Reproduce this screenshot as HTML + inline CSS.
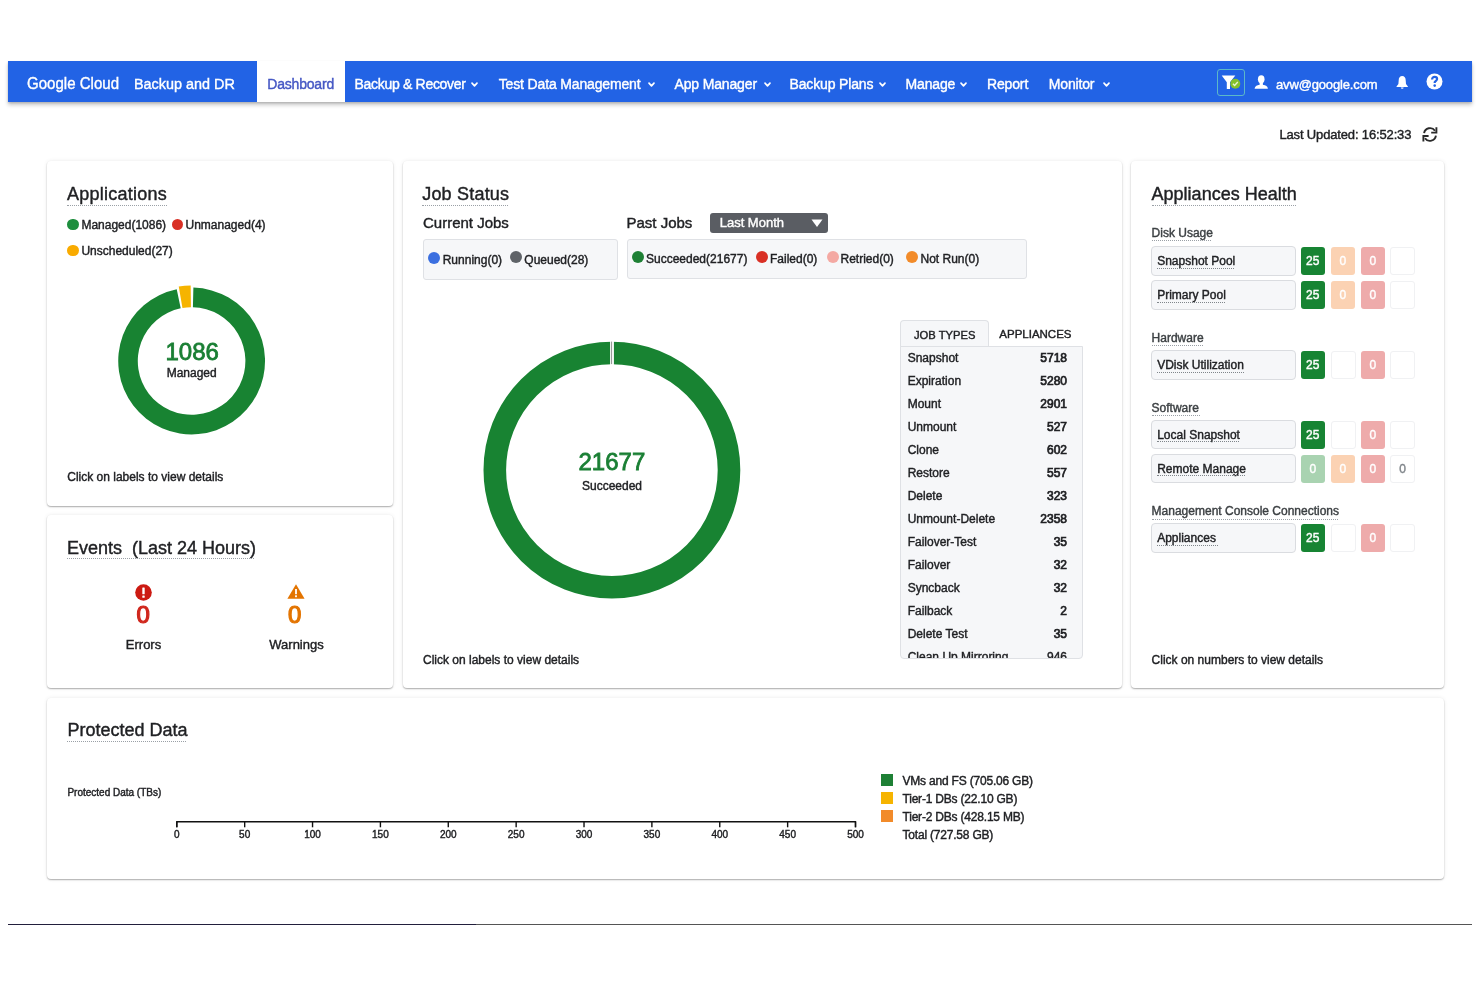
<!DOCTYPE html>
<html><head><meta charset="utf-8"><title>Dashboard</title>
<style>
html,body{margin:0;padding:0;background:#fff;width:1480px;height:987px;overflow:hidden;position:relative;}
body{font-family:"Liberation Sans",sans-serif;color:#202124;}
.t{position:absolute;line-height:1;white-space:nowrap;-webkit-text-stroke:0.4px currentColor;}
.r{position:absolute;box-sizing:border-box;}
svg{position:absolute;overflow:visible;}
.wrap{position:absolute;left:0;top:0;width:1480px;height:987px;filter:blur(0.55px);}
</style></head><body><div class="wrap">

<div class="r" style="left:8px;top:61px;width:1464px;height:41px;background:#2263e5;box-shadow:0 3px 4px rgba(0,0,0,0.22),0 1px 2px rgba(0,0,0,0.15);"></div>
<div class="r" style="left:257px;top:61px;width:88px;height:41px;background:#fff;"></div>
<div class="t" style="left:27.00px;top:74.61px;font-size:17px;color:#fff;transform:scaleX(0.885);transform-origin:0 0;">Google Cloud</div>
<div class="t" style="left:134.00px;top:75.76px;font-size:15.4px;color:#fff;transform:scaleX(0.936);transform-origin:0 0;">Backup and DR</div>
<div class="t" style="left:267.30px;top:76.55px;font-size:14px;color:#4557c4;letter-spacing:-0.2px;">Dashboard</div>
<div class="t" style="left:354.50px;top:76.75px;font-size:14px;color:#fff;letter-spacing:-0.3px;">Backup &amp; Recover</div>
<svg style="left:471.1px;top:82.2px" width="7" height="6" viewBox="0 0 7 6"><path d="M1 1.2 L3.5 3.8 L6 1.2" fill="none" stroke="#fff" stroke-width="1.7" stroke-linecap="round" stroke-linejoin="round"/></svg>
<div class="t" style="left:498.75px;top:76.75px;font-size:14px;color:#fff;letter-spacing:-0.15px;">Test Data Management</div>
<svg style="left:648.0px;top:82.2px" width="7" height="6" viewBox="0 0 7 6"><path d="M1 1.2 L3.5 3.8 L6 1.2" fill="none" stroke="#fff" stroke-width="1.7" stroke-linecap="round" stroke-linejoin="round"/></svg>
<div class="t" style="left:674.50px;top:76.75px;font-size:14px;color:#fff;letter-spacing:-0.15px;">App Manager</div>
<svg style="left:763.5px;top:82.2px" width="7" height="6" viewBox="0 0 7 6"><path d="M1 1.2 L3.5 3.8 L6 1.2" fill="none" stroke="#fff" stroke-width="1.7" stroke-linecap="round" stroke-linejoin="round"/></svg>
<div class="t" style="left:789.50px;top:76.75px;font-size:14px;color:#fff;letter-spacing:-0.15px;">Backup Plans</div>
<svg style="left:879.0px;top:82.2px" width="7" height="6" viewBox="0 0 7 6"><path d="M1 1.2 L3.5 3.8 L6 1.2" fill="none" stroke="#fff" stroke-width="1.7" stroke-linecap="round" stroke-linejoin="round"/></svg>
<div class="t" style="left:905.50px;top:76.75px;font-size:14px;color:#fff;letter-spacing:-0.15px;">Manage</div>
<svg style="left:960.0px;top:82.2px" width="7" height="6" viewBox="0 0 7 6"><path d="M1 1.2 L3.5 3.8 L6 1.2" fill="none" stroke="#fff" stroke-width="1.7" stroke-linecap="round" stroke-linejoin="round"/></svg>
<div class="t" style="left:987.00px;top:76.75px;font-size:14px;color:#fff;letter-spacing:-0.15px;">Report</div>
<div class="t" style="left:1048.75px;top:76.75px;font-size:14px;color:#fff;letter-spacing:-0.15px;">Monitor</div>
<svg style="left:1102.5px;top:82.2px" width="7" height="6" viewBox="0 0 7 6"><path d="M1 1.2 L3.5 3.8 L6 1.2" fill="none" stroke="#fff" stroke-width="1.7" stroke-linecap="round" stroke-linejoin="round"/></svg>
<div class="r" style="left:1217px;top:69px;width:28px;height:27px;border:1.5px solid #5cb8c8;border-radius:3px;"></div>
<svg style="left:1220px;top:74px" width="22" height="18" viewBox="0 0 22 18"><path d="M1.7 1.6 H15.3 L10 8.2 V14.9 H6.8 V8.2 Z" fill="#fff"/><circle cx="15.3" cy="9.7" r="5" fill="#84c12c"/><path d="M12.9 9.8 L14.6 11.4 L17.8 8.1" fill="none" stroke="#e8f5d0" stroke-width="1.4"/></svg>
<svg style="left:1254px;top:74px" width="15" height="16" viewBox="0 0 15 16"><ellipse cx="7.25" cy="5.2" rx="3.3" ry="4" fill="#fff"/><rect x="5.6" y="8" width="3.3" height="3.5" fill="#fff"/><path d="M0.6 14.8 C0.8 12.2 3 10.8 7.25 10.8 C11.5 10.8 13.7 12.2 13.9 14.8 Z" fill="#fff"/></svg>
<div class="t" style="left:1276.00px;top:77.50px;font-size:13px;color:#fff;letter-spacing:-0.15px;">avw@google.com</div>
<svg style="left:1395px;top:75px" width="14" height="15" viewBox="0 0 14 15"><path d="M7.2 0.9 C5 0.9 3.7 2.8 3.7 5.2 L3.4 9 L1.5 11.6 V12 H12.9 V11.6 L11 9 L10.7 5.2 C10.7 2.8 9.4 0.9 7.2 0.9 Z" fill="#fff"/><path d="M5.8 12.4 A1.4 1.4 0 0 0 8.6 12.4 Z" fill="#fff"/></svg>
<svg style="left:1426px;top:72.7px" width="17" height="17" viewBox="0 0 17 17"><circle cx="8.5" cy="8.5" r="8" fill="#fff"/><path d="M6.1 6.4 C6.1 4.8 7.2 3.9 8.6 3.9 C10.1 3.9 11.1 4.8 11.1 6.1 C11.1 7.6 9.3 7.9 8.7 9.3 V10" fill="none" stroke="#2263e5" stroke-width="2.2"/><circle cx="8.7" cy="12.6" r="1.3" fill="#2263e5"/></svg>
<div class="t" style="left:1279.40px;top:128.10px;font-size:13px;letter-spacing:-0.15px;">Last Updated: 16:52:33</div>
<svg style="left:1422px;top:126px" width="16" height="17" viewBox="0 0 16 17"><path d="M2.1 7.2 A6 6 0 0 1 13 4.8" fill="none" stroke="#2a2a2a" stroke-width="1.9"/><path d="M9.2 6.6 H14.4 V1.3" fill="none" stroke="#2a2a2a" stroke-width="1.9"/><path d="M13.9 9.6 A6 6 0 0 1 3 12.2" fill="none" stroke="#2a2a2a" stroke-width="1.9"/><path d="M6.6 10 H1.4 V15.6" fill="none" stroke="#2a2a2a" stroke-width="1.9"/></svg>
<div class="r" style="left:47px;top:161px;width:346px;height:345px;background:#fff;border-radius:4px;box-shadow:0 1px 1.5px rgba(0,0,0,0.30),0 0 4px rgba(0,0,0,0.08);"></div>
<div class="r" style="left:47px;top:515px;width:346px;height:173px;background:#fff;border-radius:4px;box-shadow:0 1px 1.5px rgba(0,0,0,0.30),0 0 4px rgba(0,0,0,0.08);"></div>
<div class="r" style="left:403px;top:161px;width:719px;height:527px;background:#fff;border-radius:4px;box-shadow:0 1px 1.5px rgba(0,0,0,0.30),0 0 4px rgba(0,0,0,0.08);"></div>
<div class="r" style="left:1131px;top:161px;width:313px;height:527px;background:#fff;border-radius:4px;box-shadow:0 1px 1.5px rgba(0,0,0,0.30),0 0 4px rgba(0,0,0,0.08);"></div>
<div class="r" style="left:47px;top:698px;width:1397px;height:181px;background:#fff;border-radius:4px;box-shadow:0 1px 1.5px rgba(0,0,0,0.30),0 0 4px rgba(0,0,0,0.08);"></div>
<div class="t" style="left:67.00px;top:184.76px;font-size:18px;letter-spacing:0.25px;">Applications</div>
<div class="r" style="left:67px;top:204.5px;width:99.5px;height:1px;border-top:1px dotted #9aa0a6;"></div>
<div class="r" style="left:67.05px;top:218.55px;width:11.5px;height:11.5px;background:#1e8e3e;border-radius:50%;"></div>
<div class="t" style="left:81.40px;top:218.84px;font-size:12px;">Managed(1086)</div>
<div class="r" style="left:171.75px;top:218.55px;width:11.5px;height:11.5px;background:#d93025;border-radius:50%;"></div>
<div class="t" style="left:185.50px;top:218.84px;font-size:12px;">Unmanaged(4)</div>
<div class="r" style="left:67.05px;top:244.55px;width:11.5px;height:11.5px;background:#f9ab00;border-radius:50%;"></div>
<div class="t" style="left:81.40px;top:244.84px;font-size:12px;">Unscheduled(27)</div>
<svg style="left:0;top:0" width="1480" height="987"><path d="M193.39 287.62 A73.4 73.4 0 1 1 176.72 289.13 L180.69 308.32 A53.8 53.8 0 1 0 192.91 307.22 Z" fill="#188332"/><path d="M178.75 286.60 A75.5 75.5 0 0 1 190.68 285.51 L190.94 307.20 A53.8 53.8 0 0 0 182.44 307.99 Z" fill="#f6b400"/></svg>
<div class="t" style="left:165.50px;top:340.08px;font-size:24px;color:#1a7f34;-webkit-text-stroke:0.8px currentColor;">1086</div>
<div class="t" style="left:41.70px;width:300px;text-align:center;top:367.14px;font-size:12px;color:#202124;font-weight:400;">Managed</div>
<div class="t" style="left:67.25px;top:471.34px;font-size:12px;">Click on labels to view details</div>
<div class="t" style="left:67.00px;top:538.56px;font-size:18px;">Events&nbsp;&nbsp;(Last 24 Hours)</div>
<div class="r" style="left:67px;top:558.3px;width:186.5px;height:1px;border-top:1px dotted #9aa0a6;"></div>
<svg style="left:135px;top:584px" width="17" height="17" viewBox="0 0 17 17"><circle cx="8.5" cy="8.5" r="8.3" fill="#cc1a12"/><rect x="7.3" y="3.6" width="2.4" height="6.6" rx="0.5" fill="#fff"/><rect x="7.3" y="11.4" width="2.4" height="2.3" rx="0.5" fill="#fff"/></svg>
<div class="t" style="left:-6.80px;width:300px;text-align:center;top:602.68px;font-size:24px;color:#d0271d;font-weight:400;-webkit-text-stroke:1.2px currentColor;">0</div>
<div class="t" style="left:-6.50px;width:300px;text-align:center;top:638.20px;font-size:13px;color:#202124;font-weight:400;">Errors</div>
<svg style="left:287px;top:584px" width="18" height="15" viewBox="0 0 18 15"><path d="M9 0.3 L17.6 14.8 H0.4 Z" fill="#e37400"/><rect x="8.1" y="5" width="1.8" height="5.2" fill="#fff"/><rect x="8.1" y="11.3" width="1.8" height="1.9" fill="#fff"/></svg>
<div class="t" style="left:144.60px;width:300px;text-align:center;top:602.68px;font-size:24px;color:#e37400;font-weight:400;-webkit-text-stroke:1.2px currentColor;">0</div>
<div class="t" style="left:146.50px;width:300px;text-align:center;top:638.20px;font-size:13px;color:#202124;font-weight:400;">Warnings</div>
<div class="t" style="left:422.20px;top:185.06px;font-size:18px;letter-spacing:0.2px;">Job Status</div>
<div class="r" style="left:422.2px;top:204.8px;width:86.3px;height:1px;border-top:1px dotted #9aa0a6;"></div>
<div class="t" style="left:423.00px;top:214.60px;font-size:15px;">Current Jobs</div>
<div class="t" style="left:626.50px;top:214.60px;font-size:15px;">Past Jobs</div>
<div class="r" style="left:710px;top:212.6px;width:118px;height:20px;background:#5a5d63;border-radius:3px;"></div>
<div class="t" style="left:719.70px;top:215.90px;font-size:13px;color:#fff;">Last Month</div>
<svg style="left:810.5px;top:218.8px" width="12" height="9" viewBox="0 0 12 9"><path d="M0.5 0.5 H11.5 L6 8 Z" fill="#fff"/></svg>
<div class="r" style="left:423px;top:239.2px;width:195px;height:40.5px;background:#f6f7f9;border:1px solid #dfe1e5;border-radius:3px;"></div>
<div class="r" style="left:626.5px;top:239.2px;width:400px;height:40.2px;background:#f6f7f9;border:1px solid #dfe1e5;border-radius:3px;"></div>
<div class="r" style="left:428.3px;top:251.60000000000002px;width:12px;height:12px;background:#3b6fe0;border-radius:50%;"></div>
<div class="t" style="left:442.70px;top:254.34px;font-size:12px;">Running(0)</div>
<div class="r" style="left:509.70000000000005px;top:251.3px;width:12px;height:12px;background:#5f6368;border-radius:50%;"></div>
<div class="t" style="left:524.30px;top:254.34px;font-size:12px;">Queued(28)</div>
<div class="r" style="left:631.8px;top:251.3px;width:12px;height:12px;background:#1e8035;border-radius:50%;"></div>
<div class="t" style="left:646.00px;top:253.34px;font-size:12px;">Succeeded(21677)</div>
<div class="r" style="left:755.6px;top:251.3px;width:12px;height:12px;background:#d93025;border-radius:50%;"></div>
<div class="t" style="left:770.00px;top:253.34px;font-size:12px;">Failed(0)</div>
<div class="r" style="left:826.7px;top:251.3px;width:12px;height:12px;background:#f4a9a3;border-radius:50%;"></div>
<div class="t" style="left:840.50px;top:253.34px;font-size:12px;">Retried(0)</div>
<div class="r" style="left:906.0px;top:251.3px;width:12px;height:12px;background:#f28b2a;border-radius:50%;"></div>
<div class="t" style="left:920.50px;top:253.34px;font-size:12px;">Not Run(0)</div>
<svg style="left:0;top:0" width="1480" height="987"><circle cx="611.9" cy="470.1" r="117.1" fill="none" stroke="#188332" stroke-width="22.6"/><rect x="610.1" y="340.1" width="3.8" height="25" fill="#fff"/><rect x="611.0" y="341.6" width="1.1" height="22.5" fill="#9a9a9a"/></svg>
<div class="t" style="left:461.90px;width:300px;text-align:center;top:450.28px;font-size:24px;color:#1a7f34;font-weight:400;-webkit-text-stroke:0.8px currentColor;">21677</div>
<div class="t" style="left:462.00px;width:300px;text-align:center;top:480.04px;font-size:12px;color:#202124;font-weight:400;">Succeeded</div>
<div class="t" style="left:423.00px;top:653.54px;font-size:12px;">Click on labels to view details</div>
<div class="r" style="left:899.8px;top:319.6px;width:89px;height:27px;background:#f6f7f9;border:1px solid #dfe1e5;border-bottom:none;border-radius:4px 4px 0 0;"></div>
<div class="t" style="left:914.00px;top:329.82px;font-size:11.2px;">JOB TYPES</div>
<div class="t" style="left:999.30px;top:328.57px;font-size:11.5px;">APPLIANCES</div>
<div class="r" style="left:900px;top:345.5px;width:183px;height:313px;background:#f6f7f9;border:1px solid #dfe1e5;border-top:1px solid #dfe1e5;border-radius:0 0 4px 4px;overflow:hidden;"></div>
<div class="t" style="left:907.70px;top:351.84px;font-size:12px;">Snapshot</div>
<div class="t" style="right:413.00px;top:351.84px;font-size:12px;color:#202124;font-weight:400;-webkit-text-stroke:0.7px currentColor;">5718</div>
<div class="t" style="left:907.70px;top:374.84px;font-size:12px;">Expiration</div>
<div class="t" style="right:413.00px;top:374.84px;font-size:12px;color:#202124;font-weight:400;-webkit-text-stroke:0.7px currentColor;">5280</div>
<div class="t" style="left:907.70px;top:397.84px;font-size:12px;">Mount</div>
<div class="t" style="right:413.00px;top:397.84px;font-size:12px;color:#202124;font-weight:400;-webkit-text-stroke:0.7px currentColor;">2901</div>
<div class="t" style="left:907.70px;top:420.84px;font-size:12px;">Unmount</div>
<div class="t" style="right:413.00px;top:420.84px;font-size:12px;color:#202124;font-weight:400;-webkit-text-stroke:0.7px currentColor;">527</div>
<div class="t" style="left:907.70px;top:443.84px;font-size:12px;">Clone</div>
<div class="t" style="right:413.00px;top:443.84px;font-size:12px;color:#202124;font-weight:400;-webkit-text-stroke:0.7px currentColor;">602</div>
<div class="t" style="left:907.70px;top:466.84px;font-size:12px;">Restore</div>
<div class="t" style="right:413.00px;top:466.84px;font-size:12px;color:#202124;font-weight:400;-webkit-text-stroke:0.7px currentColor;">557</div>
<div class="t" style="left:907.70px;top:489.84px;font-size:12px;">Delete</div>
<div class="t" style="right:413.00px;top:489.84px;font-size:12px;color:#202124;font-weight:400;-webkit-text-stroke:0.7px currentColor;">323</div>
<div class="t" style="left:907.70px;top:512.84px;font-size:12px;">Unmount-Delete</div>
<div class="t" style="right:413.00px;top:512.84px;font-size:12px;color:#202124;font-weight:400;-webkit-text-stroke:0.7px currentColor;">2358</div>
<div class="t" style="left:907.70px;top:535.84px;font-size:12px;">Failover-Test</div>
<div class="t" style="right:413.00px;top:535.84px;font-size:12px;color:#202124;font-weight:400;-webkit-text-stroke:0.7px currentColor;">35</div>
<div class="t" style="left:907.70px;top:558.84px;font-size:12px;">Failover</div>
<div class="t" style="right:413.00px;top:558.84px;font-size:12px;color:#202124;font-weight:400;-webkit-text-stroke:0.7px currentColor;">32</div>
<div class="t" style="left:907.70px;top:581.84px;font-size:12px;">Syncback</div>
<div class="t" style="right:413.00px;top:581.84px;font-size:12px;color:#202124;font-weight:400;-webkit-text-stroke:0.7px currentColor;">32</div>
<div class="t" style="left:907.70px;top:604.84px;font-size:12px;">Failback</div>
<div class="t" style="right:413.00px;top:604.84px;font-size:12px;color:#202124;font-weight:400;-webkit-text-stroke:0.7px currentColor;">2</div>
<div class="t" style="left:907.70px;top:627.84px;font-size:12px;">Delete Test</div>
<div class="t" style="right:413.00px;top:627.84px;font-size:12px;color:#202124;font-weight:400;-webkit-text-stroke:0.7px currentColor;">35</div>
<div class="r" style="left:901px;top:646px;width:181px;height:12px;overflow:hidden;"><div class="t" style="left:6.7px;top:4.84px;font-size:12px;">Clean Up Mirroring</div><div class="t" style="right:15px;top:4.84px;font-size:12px;font-weight:500;">946</div></div>
<div class="t" style="left:1151.60px;top:184.86px;font-size:18px;">Appliances Health</div>
<div class="r" style="left:1151.6px;top:204.6px;width:144.4px;height:1px;border-top:1px dotted #9aa0a6;"></div>
<div class="t" style="left:1151.60px;top:227.24px;font-size:12px;color:#3c4043;">Disk Usage</div>
<div class="r" style="left:1151.6px;top:240.4px;width:59px;height:1px;border-top:1px dotted #9aa0a6;"></div>
<div class="r" style="left:1151px;top:246.2px;width:145px;height:29.5px;background:#f6f7f9;border:1px solid #dadce0;border-radius:4px;"></div>
<div class="t" style="left:1157.20px;top:255.24px;font-size:12px;">Snapshot Pool</div>
<div class="r" style="left:1157.2px;top:267.7px;width:77px;height:1px;border-top:1px dotted #80868b;"></div>
<div class="r" style="left:1300.5px;top:247.0px;width:24.5px;height:28px;background:#178433;border-radius:3px;"></div>
<div class="t" style="left:1162.80px;width:300px;text-align:center;top:255.04px;font-size:12px;color:#fff;font-weight:400;">25</div>
<div class="r" style="left:1330.5px;top:247.0px;width:24.5px;height:28px;background:#fbd2b3;border-radius:3px;"></div>
<div class="t" style="left:1192.80px;width:300px;text-align:center;top:255.04px;font-size:12px;color:#fff;font-weight:400;">0</div>
<div class="r" style="left:1360.5px;top:247.0px;width:24.5px;height:28px;background:#eeabab;border-radius:3px;"></div>
<div class="t" style="left:1222.80px;width:300px;text-align:center;top:255.04px;font-size:12px;color:#fff;font-weight:400;">0</div>
<div class="r" style="left:1390.3px;top:247.0px;width:25px;height:28px;border:1px solid #f0f1f3;border-radius:3px;"></div>
<div class="r" style="left:1151px;top:280.4px;width:145px;height:29.5px;background:#f6f7f9;border:1px solid #dadce0;border-radius:4px;"></div>
<div class="t" style="left:1157.20px;top:289.44px;font-size:12px;">Primary Pool</div>
<div class="r" style="left:1157.2px;top:301.9px;width:67.5px;height:1px;border-top:1px dotted #80868b;"></div>
<div class="r" style="left:1300.5px;top:281.2px;width:24.5px;height:28px;background:#178433;border-radius:3px;"></div>
<div class="t" style="left:1162.80px;width:300px;text-align:center;top:289.24px;font-size:12px;color:#fff;font-weight:400;">25</div>
<div class="r" style="left:1330.5px;top:281.2px;width:24.5px;height:28px;background:#fbd2b3;border-radius:3px;"></div>
<div class="t" style="left:1192.80px;width:300px;text-align:center;top:289.24px;font-size:12px;color:#fff;font-weight:400;">0</div>
<div class="r" style="left:1360.5px;top:281.2px;width:24.5px;height:28px;background:#eeabab;border-radius:3px;"></div>
<div class="t" style="left:1222.80px;width:300px;text-align:center;top:289.24px;font-size:12px;color:#fff;font-weight:400;">0</div>
<div class="r" style="left:1390.3px;top:281.2px;width:25px;height:28px;border:1px solid #f0f1f3;border-radius:3px;"></div>
<div class="t" style="left:1151.60px;top:331.54px;font-size:12px;color:#3c4043;">Hardware</div>
<div class="r" style="left:1151.6px;top:344.7px;width:51px;height:1px;border-top:1px dotted #9aa0a6;"></div>
<div class="r" style="left:1151px;top:350px;width:145px;height:29.5px;background:#f6f7f9;border:1px solid #dadce0;border-radius:4px;"></div>
<div class="t" style="left:1157.20px;top:359.04px;font-size:12px;">VDisk Utilization</div>
<div class="r" style="left:1157.2px;top:371.5px;width:87px;height:1px;border-top:1px dotted #80868b;"></div>
<div class="r" style="left:1300.5px;top:350.8px;width:24.5px;height:28px;background:#178433;border-radius:3px;"></div>
<div class="t" style="left:1162.80px;width:300px;text-align:center;top:358.84px;font-size:12px;color:#fff;font-weight:400;">25</div>
<div class="r" style="left:1330.5px;top:350.8px;width:25px;height:28px;border:1px solid #f0f1f3;border-radius:3px;"></div>
<div class="r" style="left:1360.5px;top:350.8px;width:24.5px;height:28px;background:#eeabab;border-radius:3px;"></div>
<div class="t" style="left:1222.80px;width:300px;text-align:center;top:358.84px;font-size:12px;color:#fff;font-weight:400;">0</div>
<div class="r" style="left:1390.3px;top:350.8px;width:25px;height:28px;border:1px solid #f0f1f3;border-radius:3px;"></div>
<div class="t" style="left:1151.60px;top:401.84px;font-size:12px;color:#3c4043;">Software</div>
<div class="r" style="left:1151.6px;top:415px;width:48px;height:1px;border-top:1px dotted #9aa0a6;"></div>
<div class="r" style="left:1151px;top:419.8px;width:145px;height:29.5px;background:#f6f7f9;border:1px solid #dadce0;border-radius:4px;"></div>
<div class="t" style="left:1157.20px;top:428.84px;font-size:12px;">Local Snapshot</div>
<div class="r" style="left:1157.2px;top:441.3px;width:82px;height:1px;border-top:1px dotted #80868b;"></div>
<div class="r" style="left:1300.5px;top:420.6px;width:24.5px;height:28px;background:#178433;border-radius:3px;"></div>
<div class="t" style="left:1162.80px;width:300px;text-align:center;top:428.64px;font-size:12px;color:#fff;font-weight:400;">25</div>
<div class="r" style="left:1330.5px;top:420.6px;width:25px;height:28px;border:1px solid #f0f1f3;border-radius:3px;"></div>
<div class="r" style="left:1360.5px;top:420.6px;width:24.5px;height:28px;background:#eeabab;border-radius:3px;"></div>
<div class="t" style="left:1222.80px;width:300px;text-align:center;top:428.64px;font-size:12px;color:#fff;font-weight:400;">0</div>
<div class="r" style="left:1390.3px;top:420.6px;width:25px;height:28px;border:1px solid #f0f1f3;border-radius:3px;"></div>
<div class="r" style="left:1151px;top:453.7px;width:145px;height:29.5px;background:#f6f7f9;border:1px solid #dadce0;border-radius:4px;"></div>
<div class="t" style="left:1157.20px;top:462.74px;font-size:12px;">Remote Manage</div>
<div class="r" style="left:1157.2px;top:475.2px;width:87.5px;height:1px;border-top:1px dotted #80868b;"></div>
<div class="r" style="left:1300.5px;top:454.5px;width:24.5px;height:28px;background:#a9d3b1;border-radius:3px;"></div>
<div class="t" style="left:1162.80px;width:300px;text-align:center;top:462.54px;font-size:12px;color:#fff;font-weight:400;">0</div>
<div class="r" style="left:1330.5px;top:454.5px;width:24.5px;height:28px;background:#fbd2b3;border-radius:3px;"></div>
<div class="t" style="left:1192.80px;width:300px;text-align:center;top:462.54px;font-size:12px;color:#fff;font-weight:400;">0</div>
<div class="r" style="left:1360.5px;top:454.5px;width:24.5px;height:28px;background:#eeabab;border-radius:3px;"></div>
<div class="t" style="left:1222.80px;width:300px;text-align:center;top:462.54px;font-size:12px;color:#fff;font-weight:400;">0</div>
<div class="r" style="left:1390.3px;top:454.5px;width:25px;height:28px;border:1px solid #f0f1f3;border-radius:3px;"></div>
<div class="t" style="left:1252.60px;width:300px;text-align:center;top:462.54px;font-size:12px;color:#80868b;font-weight:400;">0</div>
<div class="t" style="left:1151.60px;top:505.44px;font-size:12px;color:#3c4043;">Management Console Connections</div>
<div class="r" style="left:1151.6px;top:518.6px;width:186.5px;height:1px;border-top:1px dotted #9aa0a6;"></div>
<div class="r" style="left:1151px;top:523.4px;width:145px;height:29.5px;background:#f6f7f9;border:1px solid #dadce0;border-radius:4px;"></div>
<div class="t" style="left:1157.20px;top:532.44px;font-size:12px;">Appliances</div>
<div class="r" style="left:1157.2px;top:544.9px;width:61px;height:1px;border-top:1px dotted #80868b;"></div>
<div class="r" style="left:1300.5px;top:524.1999999999999px;width:24.5px;height:28px;background:#178433;border-radius:3px;"></div>
<div class="t" style="left:1162.80px;width:300px;text-align:center;top:532.24px;font-size:12px;color:#fff;font-weight:400;">25</div>
<div class="r" style="left:1330.5px;top:524.1999999999999px;width:25px;height:28px;border:1px solid #f0f1f3;border-radius:3px;"></div>
<div class="r" style="left:1360.5px;top:524.1999999999999px;width:24.5px;height:28px;background:#eeabab;border-radius:3px;"></div>
<div class="t" style="left:1222.80px;width:300px;text-align:center;top:532.24px;font-size:12px;color:#fff;font-weight:400;">0</div>
<div class="r" style="left:1390.3px;top:524.1999999999999px;width:25px;height:28px;border:1px solid #f0f1f3;border-radius:3px;"></div>
<div class="t" style="left:1151.60px;top:653.94px;font-size:12px;">Click on numbers to view details</div>
<div class="t" style="left:67.40px;top:721.16px;font-size:18px;">Protected Data</div>
<div class="r" style="left:67.4px;top:740.9px;width:119px;height:1px;border-top:1px dotted #9aa0a6;"></div>
<div class="t" style="left:67.40px;top:788.03px;font-size:10px;">Protected Data (TBs)</div>
<svg style="left:0;top:0" width="1480" height="987"><path d="M176.8 827.3 V821.8 H855.5 V827.3" fill="none" stroke="#111" stroke-width="1.4"/><line x1="176.80" y1="821.8" x2="176.80" y2="827.3" stroke="#111" stroke-width="1.4"/><line x1="244.67" y1="821.8" x2="244.67" y2="827.3" stroke="#111" stroke-width="1.4"/><line x1="312.54" y1="821.8" x2="312.54" y2="827.3" stroke="#111" stroke-width="1.4"/><line x1="380.41" y1="821.8" x2="380.41" y2="827.3" stroke="#111" stroke-width="1.4"/><line x1="448.28" y1="821.8" x2="448.28" y2="827.3" stroke="#111" stroke-width="1.4"/><line x1="516.15" y1="821.8" x2="516.15" y2="827.3" stroke="#111" stroke-width="1.4"/><line x1="584.02" y1="821.8" x2="584.02" y2="827.3" stroke="#111" stroke-width="1.4"/><line x1="651.89" y1="821.8" x2="651.89" y2="827.3" stroke="#111" stroke-width="1.4"/><line x1="719.76" y1="821.8" x2="719.76" y2="827.3" stroke="#111" stroke-width="1.4"/><line x1="787.63" y1="821.8" x2="787.63" y2="827.3" stroke="#111" stroke-width="1.4"/><line x1="855.50" y1="821.8" x2="855.50" y2="827.3" stroke="#111" stroke-width="1.4"/></svg>
<div class="t" style="left:26.80px;width:300px;text-align:center;top:829.93px;font-size:10px;color:#202124;font-weight:400;">0</div>
<div class="t" style="left:94.67px;width:300px;text-align:center;top:829.93px;font-size:10px;color:#202124;font-weight:400;">50</div>
<div class="t" style="left:162.54px;width:300px;text-align:center;top:829.93px;font-size:10px;color:#202124;font-weight:400;">100</div>
<div class="t" style="left:230.41px;width:300px;text-align:center;top:829.93px;font-size:10px;color:#202124;font-weight:400;">150</div>
<div class="t" style="left:298.28px;width:300px;text-align:center;top:829.93px;font-size:10px;color:#202124;font-weight:400;">200</div>
<div class="t" style="left:366.15px;width:300px;text-align:center;top:829.93px;font-size:10px;color:#202124;font-weight:400;">250</div>
<div class="t" style="left:434.02px;width:300px;text-align:center;top:829.93px;font-size:10px;color:#202124;font-weight:400;">300</div>
<div class="t" style="left:501.89px;width:300px;text-align:center;top:829.93px;font-size:10px;color:#202124;font-weight:400;">350</div>
<div class="t" style="left:569.76px;width:300px;text-align:center;top:829.93px;font-size:10px;color:#202124;font-weight:400;">400</div>
<div class="t" style="left:637.63px;width:300px;text-align:center;top:829.93px;font-size:10px;color:#202124;font-weight:400;">450</div>
<div class="t" style="left:705.50px;width:300px;text-align:center;top:829.93px;font-size:10px;color:#202124;font-weight:400;">500</div>
<div class="r" style="left:880.5px;top:774px;width:12px;height:11.5px;background:#1e8035;"></div>
<div class="r" style="left:880.5px;top:792.2px;width:12px;height:11.5px;background:#f6b400;"></div>
<div class="r" style="left:880.5px;top:810.2px;width:12px;height:11.5px;background:#f28b2a;"></div>
<div class="t" style="left:902.50px;top:774.94px;font-size:12px;letter-spacing:-0.2px;">VMs and FS (705.06 GB)</div>
<div class="t" style="left:902.50px;top:792.94px;font-size:12px;letter-spacing:-0.2px;">Tier-1 DBs (22.10 GB)</div>
<div class="t" style="left:902.50px;top:810.94px;font-size:12px;letter-spacing:-0.2px;">Tier-2 DBs (428.15 MB)</div>
<div class="t" style="left:902.50px;top:828.74px;font-size:12px;letter-spacing:-0.2px;">Total (727.58 GB)</div>
<div class="r" style="left:8px;top:923.6px;width:468px;height:1.6px;background:#221f3c;"></div>
<div class="r" style="left:476px;top:923.6px;width:996px;height:1.6px;background:#555;"></div>
</div></body></html>
